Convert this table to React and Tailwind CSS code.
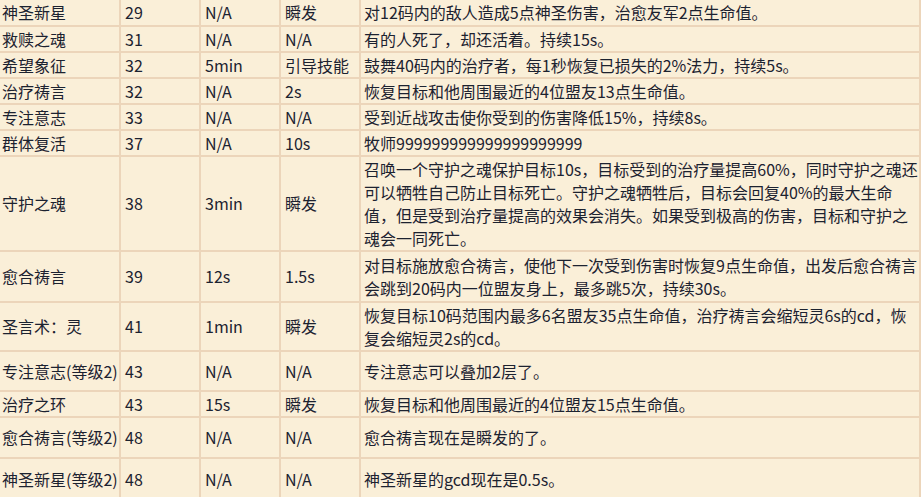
import React from 'react';

const rows = [
  { name: '神圣新星', lvl: '29', cd: 'N/A', cast: '瞬发', desc: ['对12码内的敌人造成5点神圣伤害，治愈友军2点生命值。'], h: 'h-[25px]' },
  { name: '救赎之魂', lvl: '31', cd: 'N/A', cast: 'N/A', desc: ['有的人死了，却还活着。持续15s。'], h: 'h-[24px]' },
  { name: '希望象征', lvl: '32', cd: '5min', cast: '引导技能', desc: ['鼓舞40码内的治疗者，每1秒恢复已损失的2%法力，持续5s。'], h: 'h-[24px]' },
  { name: '治疗祷言', lvl: '32', cd: 'N/A', cast: '2s', desc: ['恢复目标和他周围最近的4位盟友13点生命值。'], h: 'h-[24px]' },
  { name: '专注意志', lvl: '33', cd: 'N/A', cast: 'N/A', desc: ['受到近战攻击使你受到的伤害降低15%，持续8s。'], h: 'h-[24px]' },
  { name: '群体复活', lvl: '37', cd: 'N/A', cast: '10s', desc: ['牧师999999999999999999999'], h: 'h-[24px]' },
  {
    name: '守护之魂', lvl: '38', cd: '3min', cast: '瞬发',
    desc: [
      '召唤一个守护之魂保护目标10s，目标受到的治疗量提高60%，同时守护之魂还',
      '可以牺牲自己防止目标死亡。守护之魂牺牲后，目标会回复40%的最大生命',
      '值，但是受到治疗量提高的效果会消失。如果受到极高的伤害，目标和守护之',
      '魂会一同死亡。',
    ],
    h: 'h-[93px]',
  },
  {
    name: '愈合祷言', lvl: '39', cd: '12s', cast: '1.5s',
    desc: [
      '对目标施放愈合祷言，使他下一次受到伤害时恢复9点生命值，出发后愈合祷言',
      '会跳到20码内一位盟友身上，最多跳5次，持续30s。',
    ],
    h: 'h-[49px]',
  },
  {
    name: '圣言术：灵', lvl: '41', cd: '1min', cast: '瞬发',
    desc: [
      '恢复目标10码范围内最多6名盟友35点生命值，治疗祷言会缩短灵6s的cd，恢',
      '复会缩短灵2s的cd。',
    ],
    h: 'h-[47px]',
  },
  { name: '专注意志(等级2)', lvl: '43', cd: 'N/A', cast: 'N/A', desc: ['专注意志可以叠加2层了。'], h: 'h-[38px]' },
  { name: '治疗之环', lvl: '43', cd: '15s', cast: '瞬发', desc: ['恢复目标和他周围最近的4位盟友15点生命值。'], h: 'h-[24px]' },
  { name: '愈合祷言(等级2)', lvl: '48', cd: 'N/A', cast: 'N/A', desc: ['愈合祷言现在是瞬发的了。'], h: 'h-[39px]' },
  { name: '神圣新星(等级2)', lvl: '48', cd: 'N/A', cast: 'N/A', desc: ['神圣新星的gcd现在是0.5s。'], h: 'h-[40px]' },
];

export default function App() {
  return (
    <div className="w-[924px] h-[497px] overflow-hidden bg-white">
      <table
        className="table-fixed border-separate border-spacing-[2px] bg-[#ecd5ba] w-[925px] -ml-[4px] -mt-[2px] text-[16px] leading-[23px] text-[#1c2230]"
        style={{ fontFamily: '"Noto Sans CJK SC", "Noto Sans", sans-serif' }}
      >
        <colgroup>
          <col className="w-[121px]" />
          <col className="w-[78px]" />
          <col className="w-[78px]" />
          <col className="w-[78px]" />
          <col className="w-[558px]" />
        </colgroup>
        <tbody>
          {rows.map((r, i) => (
            <tr key={i}>
              <td className={`${r.h} bg-[#faefd8] pl-[4px] pr-0 py-0 align-middle whitespace-nowrap overflow-hidden`}>{r.name}</td>
              <td className={`${r.h} bg-[#faefd8] pl-[4px] py-0 align-middle`}>{r.lvl}</td>
              <td className={`${r.h} bg-[#faefd8] pl-[4px] py-0 align-middle`}>{r.cd}</td>
              <td className={`${r.h} bg-[#faefd8] pl-[4px] py-0 align-middle whitespace-nowrap`}>{r.cast}</td>
              <td className={`${r.h} bg-[#faefd8] pl-[3px] py-0 align-middle whitespace-nowrap overflow-hidden`}>
                {r.desc.map((line, j) => (
                  <div key={j}>{line}</div>
                ))}
              </td>
            </tr>
          ))}
        </tbody>
      </table>
    </div>
  );
}
